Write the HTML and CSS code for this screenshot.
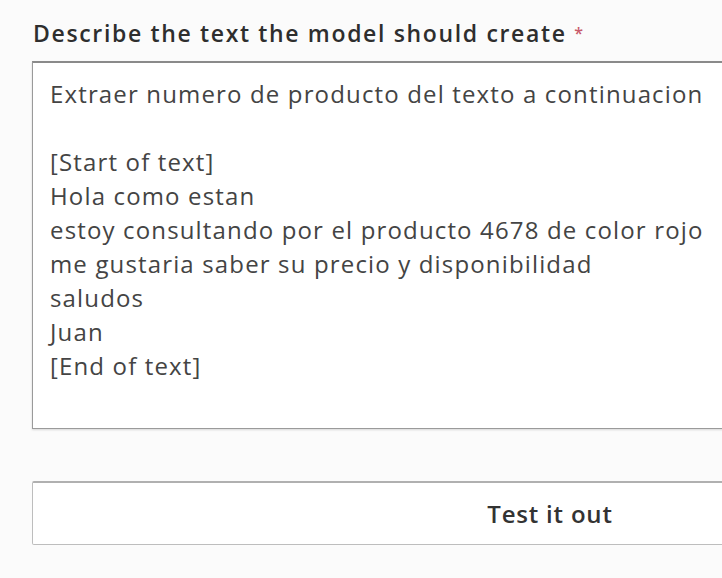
FILE: index.html
```html
<!DOCTYPE html>
<html lang="es">
<head>
<meta charset="utf-8">
<title>Describe the text</title>
<link rel="stylesheet" href="styles.css">
</head>
<body>
<main class="page">
  <div class="field">
    <label class="field-label">Describe the text the model should create <span class="req">*</span></label>
    <div class="prompt-box">
      <p class="line">Extraer numero de producto del texto a continuacion</p>
      <p class="line blank">&nbsp;</p>
      <p class="line">[Start of text]</p>
      <p class="line">Hola como estan</p>
      <p class="line">estoy consultando por el producto 4678 de color rojo</p>
      <p class="line">me gustaria saber su precio y disponibilidad</p>
      <p class="line">saludos</p>
      <p class="line">Juan</p>
      <p class="line">[End of text]</p>
    </div>
  </div>
  <button class="test-btn" type="button">Test it out</button>
</main>
</body>
</html>
```

FILE: styles.css
```css
html, body {
  margin: 0;
  padding: 0;
  background: #fbfbfb;
  overflow: hidden;
}

.page {
  width: 1040px;
  padding: 18px 0 0 32px;
  font-family: "Open Sans", "Noto Sans", sans-serif;
  color: #3b3b3b;
}

.field {
  display: flex;
  flex-direction: column;
}

.field-label {
  font-size: 23px;
  font-weight: 600;
  letter-spacing: 1.65px;
  color: #2e2e2e;
  line-height: 30px;
  padding-left: 1px;
  margin-bottom: 13px;
}

.req {
  color: #c85a6a;
  font-size: 16px;
  vertical-align: top;
  letter-spacing: 0;
}

.prompt-box {
  background: #fff;
  border: 1px solid #9a9a9a;
  border-top: 2px solid #8a8a8a;
  box-shadow: 0 1px 2px rgba(0,0,0,0.15);
  padding: 14px 0 0 17px;
  box-sizing: border-box;
  height: 368px;
}

.line {
  margin: 0;
  font-size: 24px;
  letter-spacing: 1.15px;
  line-height: 34px;
  color: #444;
  white-space: pre;
}

.test-btn {
  display: block;
  margin-top: 52px;
  width: 1036px;
  height: 64px;
  background: #fff;
  border: 1px solid #bdbdbd;
  border-top: 2px solid #b0b0b0;
  border-radius: 2px;
  font-family: "Open Sans", "Noto Sans", sans-serif;
  font-size: 24px;
  font-weight: 600;
  letter-spacing: 0.8px;
  color: #333;
  padding: 0;
}
```
